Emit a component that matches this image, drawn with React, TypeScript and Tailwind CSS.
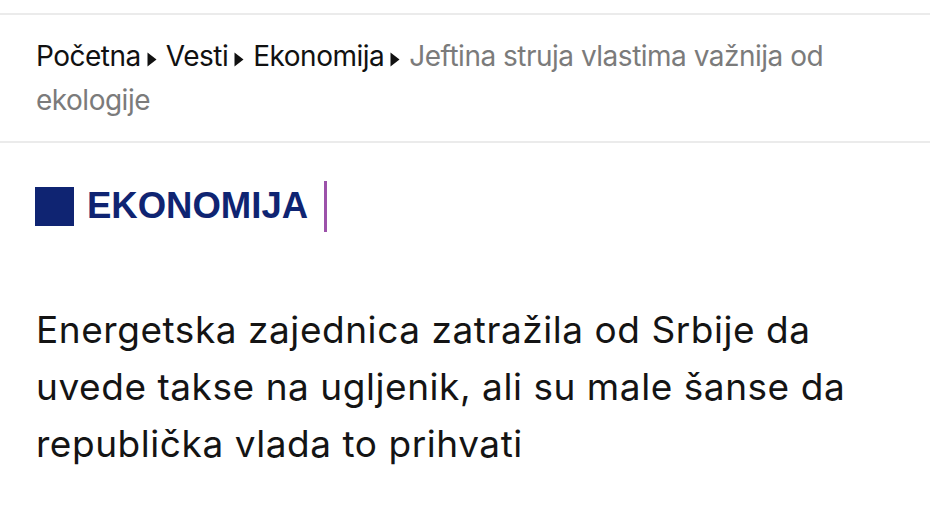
import React from "react";

function Caret() {
  return (
    <svg width="10" height="15" viewBox="0 0 10 15" className="inline-block ml-[6px] mr-[9px] align-[-1px]">
      <path d="M0.5 0.5 L9.5 7.5 L0.5 14.5 Z" fill="#111" />
    </svg>
  );
}

export default function App() {
  const crumbs = ["Početna", "Vesti", "Ekonomija"];
  const current = "Jeftina struja vlastima važnija od ekologije".split(" ");

  return (
    <div className="min-h-screen bg-white" style={{ fontFamily: "Inter, 'Noto Sans', sans-serif" }}>
      <div className="h-[13px]" />

      {/* Breadcrumb */}
      <nav className="border-y-2 border-[#ebebeb] px-9 pt-[19px] pb-[19px]">
        <p className="text-[28px] leading-[44px] tracking-[-0.5px] text-[#111]">
          {crumbs.map((c) => (
            <React.Fragment key={c}>
              <a href="#">{c}</a>
              <Caret />
            </React.Fragment>
          ))}
          {current.map((w, i) => (
            <React.Fragment key={i}>
              <span className="text-[#7b7b7b]">{w}</span>
              {i < current.length - 1 ? " " : null}
            </React.Fragment>
          ))}
        </p>
      </nav>

      {/* Category */}
      <div className="flex items-center px-[35px] mt-[38px]">
        <div className="w-[39px] h-[39px] bg-[#0f2472]" />
        <span
          className="ml-[13px] text-[36.5px] font-bold leading-none text-[#0f2472]"
          style={{ fontFamily: "'Liberation Sans', Arial, sans-serif" }}
        >
          EKONOMIJA
        </span>
        <div className="ml-[16px] w-[3px] h-[51px] bg-[#9c52aa]" />
      </div>

      {/* Headline */}
      <h1 className="px-9 mt-[69px] text-[37px] leading-[57px] font-normal text-[#141414] tracking-[0.55px] max-w-[910px]">
        Energetska zajednica zatražila od Srbije da uvede takse na ugljenik, ali su male šanse da republička vlada to prihvati
      </h1>
    </div>
  );
}
